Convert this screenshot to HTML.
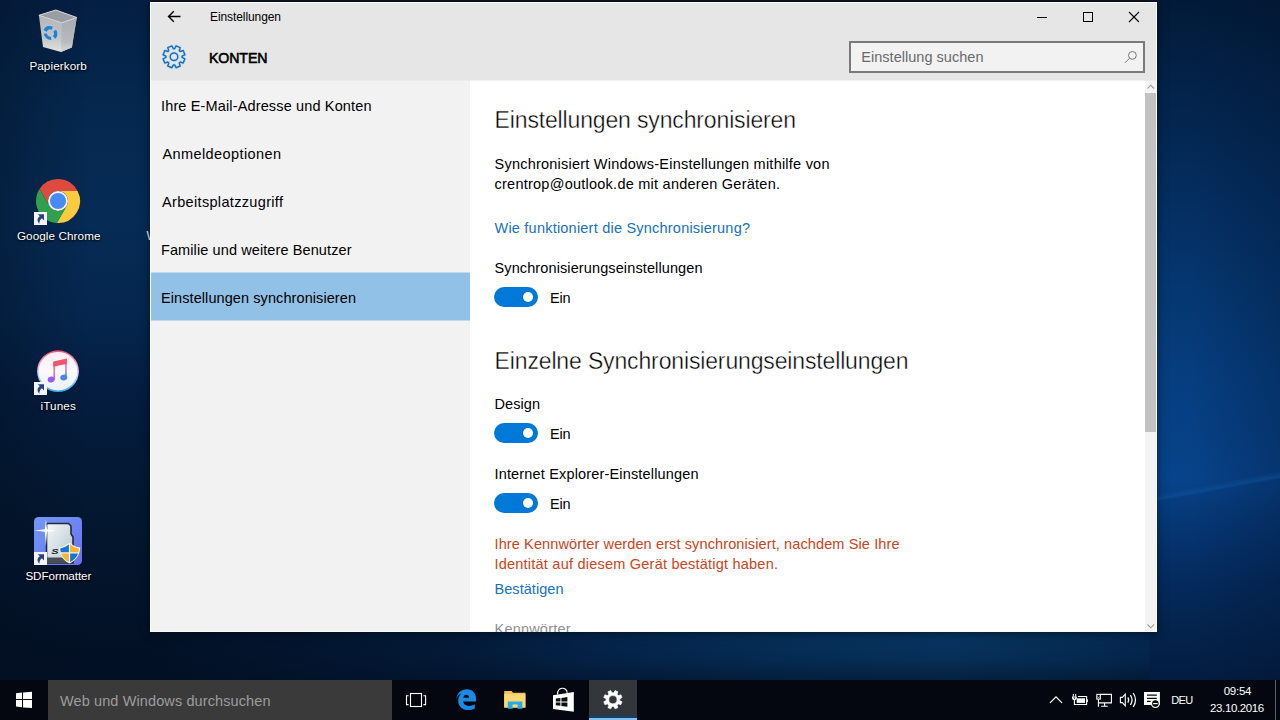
<!DOCTYPE html>
<html lang="de">
<head>
<meta charset="utf-8">
<title>Einstellungen – Konten</title>
<style>
html,body{margin:0;padding:0;}
body{width:1280px;height:720px;overflow:hidden;position:relative;font-family:"Liberation Sans",sans-serif;background:#041a3a;}
.abs{position:absolute;}
.t{position:absolute;display:block;margin:0;padding:0;font-weight:normal;text-decoration:none;white-space:nowrap;line-height:20px;}
#desk{position:absolute;left:0;top:0;width:1280px;height:720px;overflow:hidden;
 background:linear-gradient(90deg,rgba(2,14,30,.35) 0px,rgba(2,14,30,0) 90px),linear-gradient(180deg,#041f43 0px,#05284f 110px,#062b55 220px,#05274f 310px,#041d40 390px,#031831 500px,#03132a 600px,#020f22 680px);}
#bgR{position:absolute;left:1150px;top:0;width:130px;height:680px;overflow:hidden;
 background:linear-gradient(90deg,rgba(2,18,44,0) 40px,rgba(2,18,44,.28) 130px),linear-gradient(180deg,#021a38 0px,#03244c 100px,#042e60 200px,#053872 300px,#063e80 380px,#07438a 480px,#063a7a 510px,#05326c 545px,#042a5c 585px,#04244e 625px,#031c40 680px);}
#beam{position:absolute;left:-10px;top:482px;width:160px;height:8px;transform:rotate(-10.5deg);background:linear-gradient(180deg,rgba(20,98,176,0),rgba(20,98,176,.3) 70%,rgba(20,98,176,0));}
#bgB{position:absolute;left:0px;top:632px;width:1150px;height:48px;
 background:linear-gradient(90deg,rgba(3,26,56,0) 150px,#031a38 450px,#04244a 600px,#062f5a 800px,#07345f 950px,#052b54 1100px,#04264e 1150px);}
#bgB2{position:absolute;left:0;top:640px;width:1150px;height:40px;
 background:linear-gradient(180deg,rgba(3,16,38,0) 0px,rgba(3,16,38,.15) 20px,rgba(3,16,38,.55) 40px);}
#win{position:absolute;left:150px;top:2px;width:1007px;height:630px;background:#fff;box-shadow:0 1px 9px rgba(0,0,0,.5);}
#hdr{position:absolute;left:0;top:0;width:1007px;height:78px;background:#e6e6e6;}
#nav{position:absolute;left:0;top:78px;width:320px;height:552px;background:#f2f2f2;}
#sel{position:absolute;left:0;top:193px;width:320px;height:47px;background:#91c1e7;box-shadow:0 -1px 0 #c2daec,0 1px 0 #c2daec;}
#hb{position:absolute;left:0;top:78px;width:1007px;height:1px;background:linear-gradient(90deg,#ececec 0,#ececec 320px,#f2f2f2 320px,#f2f2f2 995px,#ececec 995px);}
#sb{position:absolute;left:995px;top:78px;width:12px;height:552px;background:#f4f4f4;}
#thumb{position:absolute;left:0;top:13px;width:12px;height:339px;background:#c2c2c2;}
#search{position:absolute;left:699px;top:39px;width:292px;height:28px;border:2px solid #7a7a7a;background:#f2f2f2;}
#wb{position:absolute;left:0;top:0;width:1005px;height:628px;border:1px solid #fbfbfb;}
#wintext{position:absolute;left:0;top:0;width:1280px;height:632px;overflow:hidden;}
.tog{position:absolute;left:344px;width:44px;height:20px;border-radius:10px;background:#0078d7;}
.tog i{position:absolute;left:29px;top:5px;width:10px;height:10px;border-radius:5px;background:#fff;}
#task{position:absolute;left:0;top:680px;width:1280px;height:40px;background:#04070f;}
#tsearch{position:absolute;left:48px;top:0;width:344px;height:40px;background:#3a3a3a;}
#tact{position:absolute;left:589px;top:0;width:48px;height:38px;background:linear-gradient(180deg,#33363b 0,#33363b 33px,#1f3d5c 37px);}
#tact b{position:absolute;left:0;top:38px;width:48px;height:2px;background:#7cc3f5;}
svg{position:absolute;overflow:visible;}
</style>
</head>
<body>
<div id="desk">
<!-- desktop icons -->
<div class="abs" style="left:150px;top:0;width:1009px;height:3px;background:#0d151f"></div><div id="bgR"><div id="beam"></div></div><div id="bgB"></div><div id="bgB2"></div>
<svg style="left:0px;top:0px" width="1280" height="720" viewBox="0 0 1280 720"><defs><linearGradient id="gbinL" x1="0" y1="0" x2="0" y2="1"><stop offset="0" stop-color="#b3b6bb"/><stop offset=".6" stop-color="#c2c4c7"/><stop offset="1" stop-color="#e3e2df"/></linearGradient><linearGradient id="gbinR" x1="0" y1="0" x2="0" y2="1"><stop offset="0" stop-color="#a4a8ae"/><stop offset=".7" stop-color="#b2b5ba"/><stop offset="1" stop-color="#d4d4d3"/></linearGradient><linearGradient id="gitR" x1="0" y1="0" x2="0" y2="1"><stop offset="0" stop-color="#f2506f"/><stop offset=".4" stop-color="#eeb4dc"/><stop offset=".62" stop-color="#c6d2f6"/><stop offset="1" stop-color="#36a6ee"/></linearGradient><linearGradient id="gitI" x1="0" y1="0" x2="0" y2="1"><stop offset="0" stop-color="#fbeef3"/><stop offset=".5" stop-color="#fbfafd"/><stop offset="1" stop-color="#e9f1fc"/></linearGradient><linearGradient id="gitS" x1="0" y1="0" x2="0" y2="1"><stop offset="0" stop-color="#f4536b"/><stop offset=".5" stop-color="#e486b6"/><stop offset="1" stop-color="#a468ea"/></linearGradient><linearGradient id="gitS2" x1="0" y1="0" x2="0" y2="1"><stop offset="0" stop-color="#f4536b"/><stop offset=".5" stop-color="#d88cc4"/><stop offset="1" stop-color="#5a86ee"/></linearGradient><linearGradient id="gitN" x1="0" y1="0" x2="0" y2="1"><stop offset="0" stop-color="#fb4660"/><stop offset=".45" stop-color="#e863a8"/><stop offset="1" stop-color="#6f7df2"/></linearGradient><linearGradient id="gsd" x1="0" y1="0" x2="1" y2="1"><stop offset="0" stop-color="#7396f8"/><stop offset=".5" stop-color="#6e86f3"/><stop offset="1" stop-color="#6c70ea"/></linearGradient><linearGradient id="gcard" x1="0" y1="0" x2="1" y2="1"><stop offset="0" stop-color="#f6f9fa"/><stop offset=".5" stop-color="#d3dee4"/><stop offset="1" stop-color="#b4c2cc"/></linearGradient></defs><path d="M38.9 15.3L43 47.1L61 52L71.9 47.5L76.8 17.5L61.8 22.8Z" fill="url(#gbinL)"/><path d="M61.8 22.8L76.8 17.5L71.9 47.5L61 52Z" fill="url(#gbinR)" opacity=".75"/><path d="M38.9 15.3L55.8 10L76.8 17.5L61.8 22.8Z" fill="#999ea5" stroke="#d9dcdf" stroke-width="1" stroke-linejoin="round"/><g fill="none" stroke="#1683d8" stroke-width="3.4" transform="translate(50.4 33) skewY(8)"><path d="M-5.1 -1.3A5.3 5.3 0 0 1 1.8 -5"/><path d="M4.3 -3A5.3 5.3 0 0 1 3.7 3.8"/><path d="M0.7 5.3A5.3 5.3 0 0 1 -5.2 1.3"/></g><path d="M39.54 189.03A22 22 0 0 1 77.60 191.00L58.00 191.00A10 10 0 0 0 49.34 206.00Z" fill="#de4a3d"/><path d="M77.60 191.00A22 22 0 0 1 56.86 222.97L66.66 206.00A10 10 0 0 0 58.00 191.00Z" fill="#fbcb3f"/><path d="M56.86 222.97A22 22 0 0 1 39.54 189.03L49.34 206.00A10 10 0 0 0 66.66 206.00Z" fill="#2fa050"/><circle cx="58" cy="201" r="10" fill="#f4f4f4"/><circle cx="58" cy="201" r="8" fill="#4a8af4"/><rect x="34" y="212" width="13" height="13" fill="#f3f4fa"/><path d="M37.8 214.2L44.0 214.2L44.0 220.4L41.9 218.3C40.2 219.6 39.4 221.4 39.3 223.8C37.0 221.0 36.8 218.2 39.8 216.2Z" fill="#2a4182"/><circle cx="58" cy="371.2" r="20.9" fill="url(#gitR)"/><circle cx="58" cy="371.2" r="19.3" fill="url(#gitI)"/><rect x="53.4" y="362" width="1.7" height="17.6" fill="url(#gitS)"/><rect x="65.1" y="359" width="1.7" height="18.6" fill="url(#gitS2)"/><path d="M53.4 361.6L66.8 358.6L66.8 363.7L53.4 366.7Z" fill="#f4536b"/><ellipse cx="51.1" cy="379.6" rx="3.5" ry="2.9" transform="rotate(-14 51.1 379.6)" fill="#9a5cf0"/><ellipse cx="63.8" cy="377.6" rx="3.5" ry="2.9" transform="rotate(-14 63.8 377.6)" fill="#4a84f0"/><rect x="34" y="382" width="13" height="13" fill="#f3f4fa"/><path d="M37.8 384.2L44.0 384.2L44.0 390.4L41.9 388.3C40.2 389.6 39.4 391.4 39.3 393.8C37.0 391.0 36.8 388.2 39.8 386.2Z" fill="#2a4182"/><rect x="34" y="517" width="48" height="48" rx="4.5" fill="url(#gsd)"/><path d="M47.5 523.5L68.5 523.5L71 526L71 534L73 537L73 563L46.5 563L46.5 524.5Z" fill="url(#gcard)" stroke="#222c36" stroke-width="1.6"/><rect x="46.5" y="557.5" width="22" height="5.5" fill="#4a4f56"/><text x="0" y="0" transform="translate(51.2 554.2) scale(1.35 1)" font-family="Liberation Sans, sans-serif" font-weight="bold" font-style="italic" font-size="8" fill="#141a22">S</text><path d="M59 547.5C63 547 66 545.5 69.5 542.8C73 545.5 76 547 80.2 547.5C80 555 76 560.5 69.5 563.5C63 560.5 59.4 555 59 547.5Z" fill="#f4f4f4"/><path d="M60.2 548.4C63.6 547.9 66.3 546.6 68.9 544.6L68.9 552.2L60.8 552.2C60.5 551 60.3 549.8 60.2 548.4Z" fill="#1576d2"/><path d="M70.1 544.6C72.7 546.6 75.4 547.9 79 548.4C78.9 549.8 78.7 551 78.4 552.2L70.1 552.2Z" fill="#f6b52c"/><path d="M61.1 553.4L68.9 553.4L68.9 562C65.2 560.1 62.5 557.3 61.1 553.4Z" fill="#f6b52c"/><path d="M70.1 553.4L78.1 553.4C76.7 557.3 73.9 560.1 70.1 562Z" fill="#1576d2"/><path d="M45.9 519.2L47 529.2L56 530.5L47 531.8L45.9 546L44.8 531.8L34.3 530.5L44.8 529.2Z" fill="#fff"/><rect x="34" y="552" width="13" height="13" fill="#f3f4fa"/><path d="M37.8 554.2L44.0 554.2L44.0 560.4L41.9 558.3C40.2 559.6 39.4 561.4 39.3 563.8C37.0 561.0 36.8 558.2 39.8 556.2Z" fill="#2a4182"/></svg>
<span class="t" style="left:146.5px;top:225.6px;font-size:12px;color:#fff;">W</span>
</div>

<div id="win">
 <div id="hdr"></div>
 <div id="nav"><div id="sel"></div></div>
 <div id="sb"><div id="thumb"></div></div>
 <div id="hb"></div>
 <div id="search"></div>
 <div class="tog" style="top:285px"><i></i></div>
 <div class="tog" style="top:421px"><i></i></div>
 <div class="tog" style="top:491px"><i></i></div>
<svg style="left:0px;top:0px" width="1007" height="80" viewBox="0 0 1007 80"><path d="M18.5 14.5H30.5M23.80000000000001 9.2L18.5 14.5L23.80000000000001 19.8" fill="none" stroke="#000" stroke-width="1.4"/><path d="M32.08 55.44L34.90 56.88L33.18 61.04L30.16 60.06L29.26 60.96L30.24 63.98L26.08 65.70L24.64 62.88L23.36 62.88L21.92 65.70L17.76 63.98L18.74 60.96L17.84 60.06L14.82 61.04L13.10 56.88L15.92 55.44L15.92 54.16L13.10 52.72L14.82 48.56L17.84 49.54L18.74 48.64L17.76 45.62L21.92 43.90L23.36 46.72L24.64 46.72L26.08 43.90L30.24 45.62L29.26 48.64L30.16 49.54L33.18 48.56L34.90 52.72L32.08 54.16Z" fill="none" stroke="#bfe0f8" stroke-width="3.2" stroke-linejoin="round" opacity=".7"/><circle cx="24" cy="54.8" r="4" fill="none" stroke="#bfe0f8" stroke-width="3" opacity=".7"/><path d="M32.08 55.44L34.90 56.88L33.18 61.04L30.16 60.06L29.26 60.96L30.24 63.98L26.08 65.70L24.64 62.88L23.36 62.88L21.92 65.70L17.76 63.98L18.74 60.96L17.84 60.06L14.82 61.04L13.10 56.88L15.92 55.44L15.92 54.16L13.10 52.72L14.82 48.56L17.84 49.54L18.74 48.64L17.76 45.62L21.92 43.90L23.36 46.72L24.64 46.72L26.08 43.90L30.24 45.62L29.26 48.64L30.16 49.54L33.18 48.56L34.90 52.72L32.08 54.16Z" fill="none" stroke="#1f6fb6" stroke-width="1.5" stroke-linejoin="round"/><circle cx="24" cy="54.8" r="3.8" fill="none" stroke="#1f6fb6" stroke-width="1.5"/><rect x="887" y="15" width="10" height="1" fill="#000"/><rect x="933.5" y="10.5" width="9" height="9" fill="none" stroke="#000" stroke-width="1"/><path d="M979 10L989 20M989 10L979 20" stroke="#000" stroke-width="1.1" fill="none"/><circle cx="982.4000000000001" cy="53.4" r="3.9" fill="none" stroke="#777" stroke-width="1"/><path d="M979.5999999999999 56.2L975 60.8" stroke="#777" stroke-width="1" fill="none"/><path d="M997.5 86.5L1000.8 83.2L1004.0999999999999 86.5" stroke="#a0a0a0" stroke-width="1.1" fill="none"/><path d="M997.5 622.5L1000.8 625.8L1004.0999999999999 622.5" stroke="#a0a0a0" stroke-width="1.1" fill="none"/></svg>
 <div id="wb"></div>
</div>
<div id="wintext">
<div class="t" id="t0" style="left:210.0px;top:7.1px;font-size:12px;color:#000;letter-spacing:-0.089px;">Einstellungen</div>
<div class="t" id="t1" style="left:209.0px;top:47.8px;font-size:14.2px;color:#000;letter-spacing:-0.125px;-webkit-text-stroke:0.55px #000;">KONTEN</div>
<span class="t" id="t2" style="left:861.3px;top:46.9px;font-size:14.5px;color:#6a6a6a;letter-spacing:0.027px;">Einstellung suchen</span>
<a class="t" id="t3" style="left:161.0px;top:95.6px;font-size:14.5px;color:#000;letter-spacing:0.144px;">Ihre E-Mail-Adresse und Konten</a>
<a class="t" id="t4" style="left:162.5px;top:143.6px;font-size:14.5px;color:#000;letter-spacing:0.402px;">Anmeldeoptionen</a>
<a class="t" id="t5" style="left:162.0px;top:191.6px;font-size:14.5px;color:#000;letter-spacing:0.334px;">Arbeitsplatzzugriff</a>
<a class="t" id="t6" style="left:161.0px;top:239.6px;font-size:14.5px;color:#000;letter-spacing:0.100px;">Familie und weitere Benutzer</a>
<a class="t" id="t7" style="left:161.0px;top:287.6px;font-size:14.5px;color:#000;letter-spacing:0.084px;">Einstellungen synchronisieren</a>
<h1 class="t" id="t8" style="left:494.6px;top:110.3px;font-size:23px;color:#000;letter-spacing:-0.149px;-webkit-text-stroke:0.4px #fff;">Einstellungen synchronisieren</h1>
<p class="t" id="t9" style="left:494.5px;top:153.7px;font-size:14.5px;color:#000;letter-spacing:0.229px;">Synchronisiert Windows-Einstellungen mithilfe von</p>
<p class="t" id="t10" style="left:494.5px;top:173.7px;font-size:14.5px;color:#000;letter-spacing:0.246px;">crentrop@outlook.de mit anderen Geräten.</p>
<a class="t" id="t11" style="left:494.5px;top:217.8px;font-size:14.5px;color:#1771be;letter-spacing:0.218px;">Wie funktioniert die Synchronisierung?</a>
<label class="t" id="t12" style="left:494.5px;top:257.5px;font-size:14.5px;color:#000;letter-spacing:0.112px;">Synchronisierungseinstellungen</label>
<span class="t" id="t13" style="left:550.0px;top:287.6px;font-size:14.5px;color:#000;letter-spacing:-0.134px;">Ein</span>
<h2 class="t" id="t14" style="left:494.6px;top:350.8px;font-size:23px;color:#000;letter-spacing:-0.144px;-webkit-text-stroke:0.4px #fff;">Einzelne Synchronisierungseinstellungen</h2>
<label class="t" id="t15" style="left:494.5px;top:393.7px;font-size:14.5px;color:#000;letter-spacing:0.072px;">Design</label>
<span class="t" id="t16" style="left:550.0px;top:423.7px;font-size:14.5px;color:#000;letter-spacing:-0.134px;">Ein</span>
<label class="t" id="t17" style="left:494.5px;top:463.7px;font-size:14.5px;color:#000;letter-spacing:0.164px;">Internet Explorer-Einstellungen</label>
<span class="t" id="t18" style="left:550.0px;top:493.6px;font-size:14.5px;color:#000;letter-spacing:-0.134px;">Ein</span>
<p class="t" id="t19" style="left:494.5px;top:533.7px;font-size:14.5px;color:#cb4420;letter-spacing:0.116px;">Ihre Kennwörter werden erst synchronisiert, nachdem Sie Ihre</p>
<p class="t" id="t20" style="left:494.5px;top:553.7px;font-size:14.5px;color:#cb4420;letter-spacing:0.224px;">Identität auf diesem Gerät bestätigt haben.</p>
<a class="t" id="t21" style="left:494.5px;top:579.0px;font-size:14.5px;color:#1771be;letter-spacing:0.052px;">Bestätigen</a>
<label class="t" id="t22" style="left:494.5px;top:619.2px;font-size:14.5px;color:#8f8f8f;letter-spacing:0.205px;">Kennwörter</label>
</div>

<div id="task">
 <div id="tsearch"></div>
 <div id="tact"><b></b></div>
<svg style="left:0px;top:0px" width="1280" height="40" viewBox="0 0 1280 40"><path d="M16 13.299999999999955L22 12.5V19H16ZM23 12.399999999999977L32 11.799999999999955V19H23ZM16 20H22V27.299999999999955L16 26.5ZM23 20H32V28.100000000000023L23 27.399999999999977Z" fill="#fff"/><rect x="410.5" y="13.5" width="11" height="13" fill="none" stroke="#fff" stroke-width="1.1"/><path d="M408.6 15.799999999999955H406.5V24.600000000000023H408.6M423.4 15.799999999999955H425.6V24.600000000000023H423.4" fill="none" stroke="#fff" stroke-width="1.1"/><g transform="translate(456 9.299999999999955)"><path d="M0.4 9.2C1.2 3.6 5.4 0 10.8 0C16.4 0 20 4 20 9.6V12.3H7.2C7.5 15.2 9.8 16.6 12.8 16.6C15 16.6 17 16 18.8 14.9V19.3C16.8 20.3 14.6 20.8 12.2 20.8C6.2 20.8 2.2 17 2.2 11.2C2.2 8 3.6 5.6 5.8 4C3.4 4.8 1.4 6.8 0.4 9.2ZM7.3 8.5H13C13 6.6 12 5.4 10.3 5.4C8.7 5.4 7.6 6.6 7.3 8.5Z" fill="#1b8ae4" fill-rule="evenodd"/></g><path d="M504.2 11H511.6L513 12.799999999999955H525.4V27.600000000000023H504.2Z" fill="#f3c24f"/><rect x="504.2" y="13.799999999999955" width="21.2" height="13.8" fill="#fcd872"/><path d="M507.8 21.399999999999977H522.4V28.700000000000045H517.6V24.600000000000023H512.6V28.700000000000045H507.8Z" fill="#26ace8"/><path d="M553 15.299999999999955L573.8 12V31.700000000000045L553 29Z" fill="#fff"/><path d="M557.5 14.399999999999977C557.5 6.600000000000023 566.8 6.399999999999977 567.2 12.799999999999955" fill="none" stroke="#fff" stroke-width="1.2"/><path d="M555.8 18.600000000000023L560.4 18V21.399999999999977H555.8ZM561.4 17.899999999999977L567.4 17.100000000000023V21.399999999999977H561.4ZM555.8 22.399999999999977H560.4V25.799999999999955L555.8 25.200000000000045ZM561.4 22.399999999999977H567.4V26.799999999999955L561.4 26Z" fill="#0a0f18"/><path d="M619.74 20.62L622.06 21.82L620.88 24.67L618.39 23.89L617.09 25.19L617.87 27.68L615.02 28.86L613.82 26.54L611.98 26.54L610.78 28.86L607.93 27.68L608.71 25.19L607.41 23.89L604.92 24.67L603.74 21.82L606.06 20.62L606.06 18.78L603.74 17.58L604.92 14.73L607.41 15.51L608.71 14.21L607.93 11.72L610.78 10.54L611.98 12.86L613.82 12.86L615.02 10.54L617.87 11.72L617.09 14.21L618.39 15.51L620.88 14.73L622.06 17.58L619.74 18.78ZM617 19.700000000000045A4.1 4.1 0 1 0 608.8 19.700000000000045A4.1 4.1 0 1 0 617 19.700000000000045Z" fill="#fff" fill-rule="evenodd" stroke="#fff" stroke-width=".6" stroke-linejoin="round"/><path d="M1050 22.799999999999955L1056 16.799999999999955L1062 22.799999999999955" fill="none" stroke="#fff" stroke-width="1.2"/><path d="M1078 16.5H1086.6V24.5H1076.2" fill="none" stroke="#fff" stroke-width="1.1"/><rect x="1076.7" y="18.299999999999955" width="8.3" height="4.6" fill="#fff"/><rect x="1087.1" y="19.299999999999955" width="0.9" height="2.8" fill="#fff"/><rect x="1072.8" y="13.899999999999977" width="1" height="2.7" fill="#fff"/><rect x="1075.2" y="13.899999999999977" width="1" height="2.7" fill="#fff"/><path d="M1072 16.399999999999977H1076.8V18C1076.8 19.600000000000023 1075.4 20.100000000000023 1074.4 20.100000000000023C1073.4 20.100000000000023 1072 19.600000000000023 1072 18Z" fill="#fff"/><path d="M1073.2 17.399999999999977H1075.6L1074.4 18.899999999999977Z" fill="#0a0f18"/><path d="M1074.4 20V24.5H1076.4" fill="none" stroke="#fff" stroke-width="1.1"/><path d="M1100.4 14.399999999999977H1111.4V22.899999999999977H1098.8M1104.6 22.899999999999977V26.200000000000045M1101.2 26.200000000000045H1107.8" fill="none" stroke="#fff" stroke-width="1.1"/><rect x="1096.8" y="14.399999999999977" width="3.5" height="4.7" fill="none" stroke="#fff" stroke-width="1.1"/><path d="M1097.7 16.600000000000023L1098.5 17.600000000000023L1099.4 16.600000000000023" fill="none" stroke="#fff" stroke-width=".7"/><path d="M1098.4 19.200000000000045V26.799999999999955" stroke="#fff" stroke-width="1.1"/><path d="M1120.4 17.399999999999977H1122.4L1125.3 14.200000000000045V25.799999999999955L1122.4 22.600000000000023H1120.4Z" fill="none" stroke="#fff" stroke-width="1.1"/><path d="M1127.8 17.5Q1129.7 20 1127.8 22.600000000000023M1130.4 15.200000000000045Q1133.7 20 1130.4 25M1133.2 13Q1137.8 20 1133.2 27" fill="none" stroke="#fff" stroke-width="1.25"/><rect x="1144" y="12" width="15.9" height="13" fill="#fff"/><path d="M1147 15.200000000000045H1156.8M1147 18.299999999999955H1156.8M1147 21.399999999999977H1150.6" stroke="#05080f" stroke-width="1.2"/><circle cx="1155.4" cy="23.600000000000023" r="3.9" fill="#05080f" stroke="#fff" stroke-width="1.2"/><path d="M1153.1 23.600000000000023H1157.7" stroke="#fff" stroke-width="1.2"/><rect x="1275" y="0" width="1" height="40" fill="#5a5f66"/></svg>
</div>
<span class="t" id="t23" style="left:29.4px;top:56.3px;font-size:11.7px;color:#fff;letter-spacing:0.091px;text-shadow:0 1px 2px rgba(0,0,0,.9),0 0 3px rgba(0,0,0,.7);">Papierkorb</span>
<span class="t" id="t24" style="left:16.9px;top:226.3px;font-size:11.7px;color:#fff;letter-spacing:0.090px;text-shadow:0 1px 2px rgba(0,0,0,.9),0 0 3px rgba(0,0,0,.7);">Google Chrome</span>
<span class="t" id="t25" style="left:40.6px;top:396.3px;font-size:11.7px;color:#fff;letter-spacing:0.099px;text-shadow:0 1px 2px rgba(0,0,0,.9),0 0 3px rgba(0,0,0,.7);">iTunes</span>
<span class="t" id="t26" style="left:25.4px;top:566.3px;font-size:11.7px;color:#fff;letter-spacing:-0.089px;text-shadow:0 1px 2px rgba(0,0,0,.9),0 0 3px rgba(0,0,0,.7);">SDFormatter</span>
<span class="t" id="t27" style="left:60.0px;top:690.7px;font-size:14.5px;color:#9c9c9c;letter-spacing:0.108px;">Web und Windows durchsuchen</span>
<span class="t" id="t28" style="left:1171.3px;top:689.7px;font-size:11px;color:#fff;letter-spacing:-0.717px;">DEU</span>
<span class="t" id="t29" style="left:1223.7px;top:680.8px;font-size:11.5px;color:#fff;letter-spacing:-0.245px;">09:54</span>
<span class="t" id="t30" style="left:1210.0px;top:697.6px;font-size:11.5px;color:#fff;letter-spacing:-0.368px;">23.10.2016</span>
</body>
</html>
